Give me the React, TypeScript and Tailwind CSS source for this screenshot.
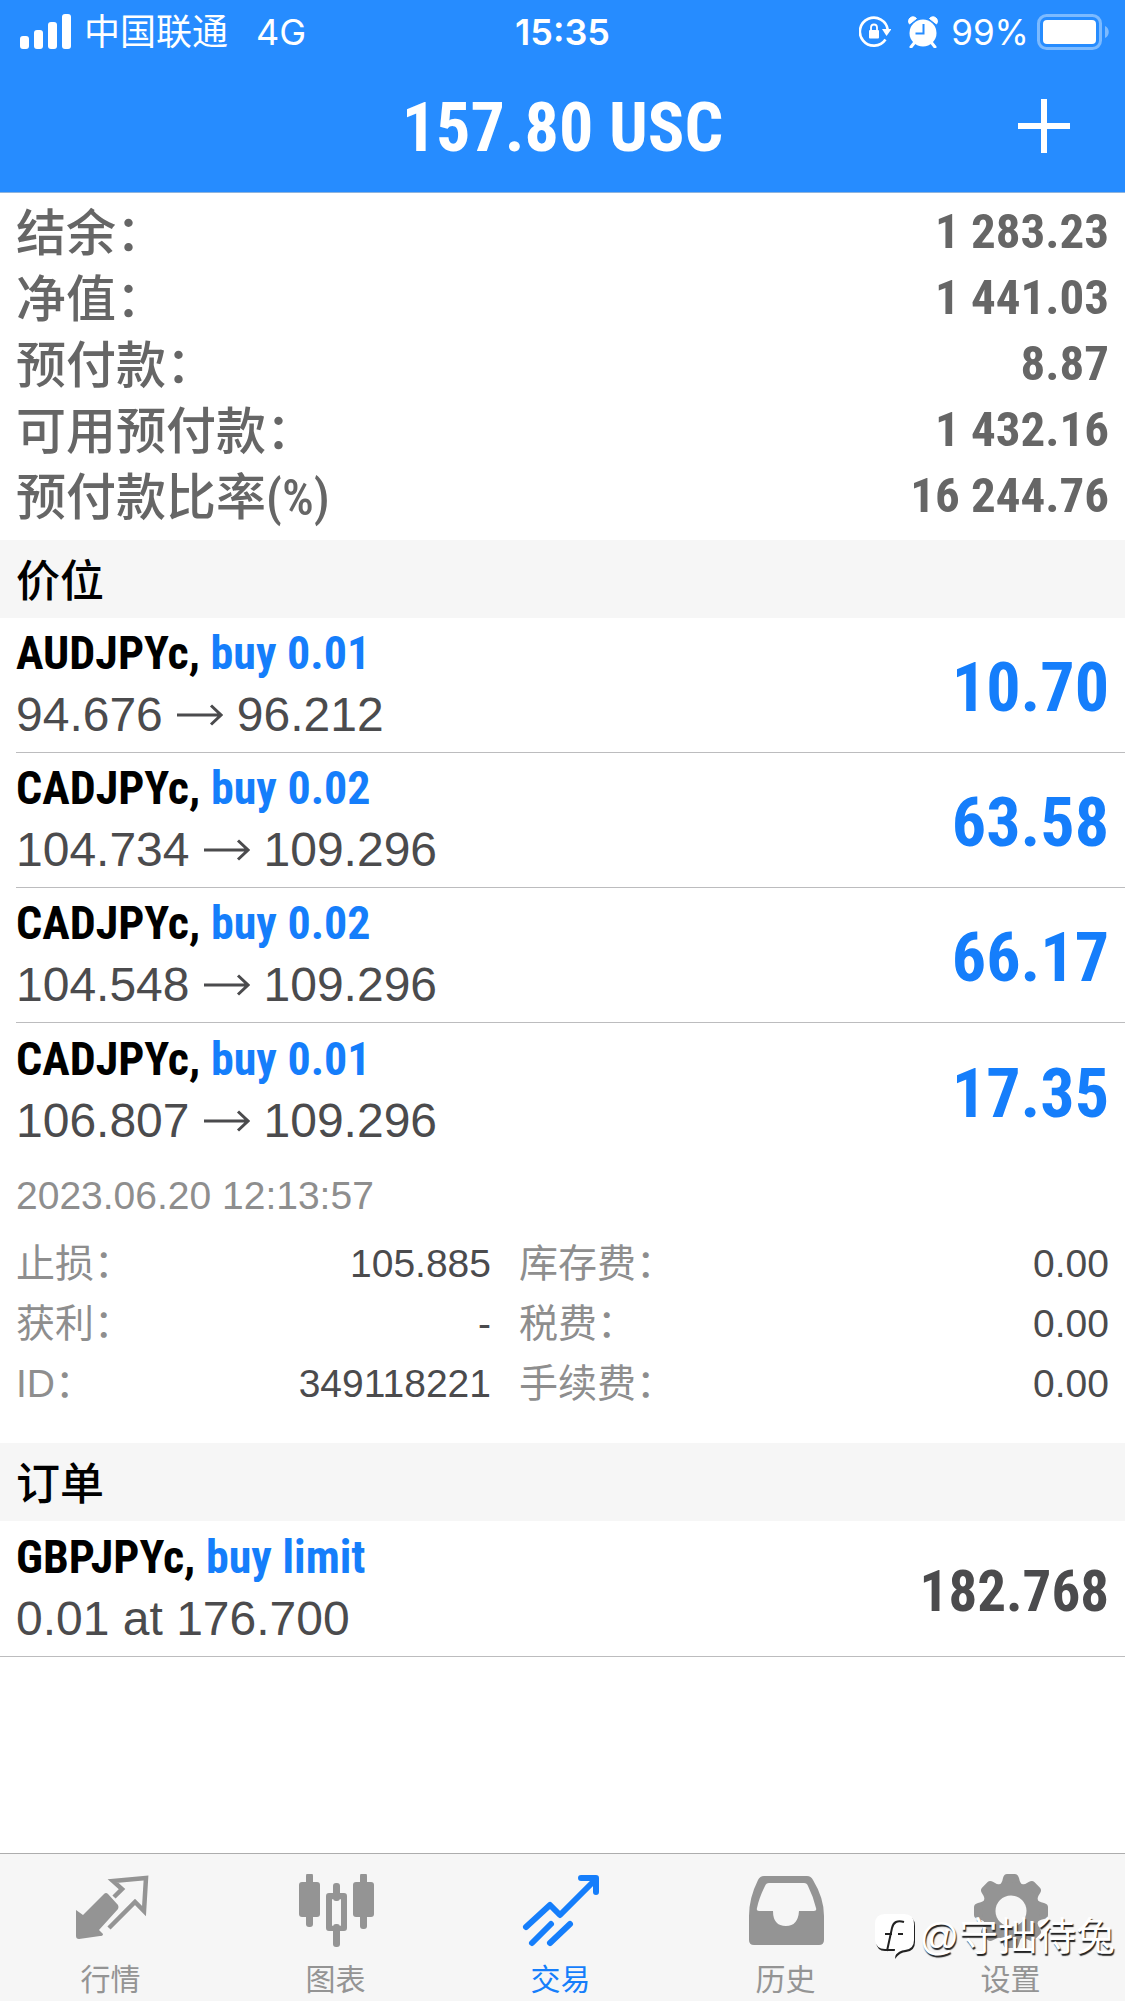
import React from 'react';

type Row = { label: string; unit?: string; value: string };

type Position = {
  id: number;
  symbol: string;
  side: string;
  open: string;
  current: string;
  profit: string;
};

const summary: Row[] = [
  { label: '结余：', value: '1 283.23' },
  { label: '净值：', value: '1 441.03' },
  { label: '预付款：', value: '8.87' },
  { label: '可用预付款：', value: '1 432.16' },
  { label: '预付款比率', unit: '(%)', value: '16 244.76' },
];

const positions: Position[] = [
  { id: 1, symbol: 'AUDJPYc', side: 'buy 0.01', open: '94.676', current: '96.212', profit: '10.70' },
  { id: 2, symbol: 'CADJPYc', side: 'buy 0.02', open: '104.734', current: '109.296', profit: '63.58' },
  { id: 3, symbol: 'CADJPYc', side: 'buy 0.02', open: '104.548', current: '109.296', profit: '66.17' },
  { id: 4, symbol: 'CADJPYc', side: 'buy 0.01', open: '106.807', current: '109.296', profit: '17.35' },
];

// 持仓详情，左右两列
const detailsLeft: Row[] = [
  { label: '止损：', value: '105.885' },
  { label: '获利：', value: '-' },
  { label: 'ID：', value: '349118221' },
];

const detailsRight: Row[] = [
  { label: '库存费：', value: '0.00' },
  { label: '税费：', value: '0.00' },
  { label: '手续费：', value: '0.00' },
];

const narrow = "font-['Roboto_Condensed','Liberation_Sans',sans-serif] font-bold";
const status = "font-[Inter,'Noto_Sans_CJK_SC',sans-serif]";
const chinese = "font-['Noto_Sans_CJK_SC',sans-serif]";

function StatusBar() {
  return (
    <div className={`${status} grid h-16 grid-cols-3 items-center px-5 text-4xl`}>
      <div className="flex items-center whitespace-nowrap">
        <svg className="mr-3 h-9 w-[52px]" viewBox="0 0 52 36" fill="white">
          <rect x="0" y="22" width="9" height="13" rx="3" />
          <rect x="14" y="16" width="9" height="19" rx="3" />
          <rect x="28" y="8" width="9" height="27" rx="3" />
          <rect x="42" y="0" width="9" height="35" rx="3" />
        </svg>
        <span>中国联通</span>
        <span className="ml-7">4G</span>
      </div>
      <span className="text-center font-semibold">15:35</span>
      <div className="-mr-1 flex items-center justify-end">
        <svg className="mr-4 size-8" viewBox="0 0 32 32" fill="none">
          <path d="M26.500 23.500A14 14 0 1 1 28.800 14" stroke="white" strokeWidth="2.600" />
          <path d="M23 13h9.500l-5 7z" fill="white" />
          <rect x="10" y="14" width="10" height="8.500" rx="1" fill="white" />
          <path d="M12 14v-2.500a3 3 0 0 1 6 0V14" stroke="white" strokeWidth="1.800" />
        </svg>
        <svg className="mr-3 size-8" viewBox="0 0 32 32" fill="none">
          <path d="m8 26-4 5M24 26l4 5" stroke="white" strokeWidth="3" strokeLinecap="round" />
          <path d="M2.500 8a4.200 4.200 0 0 1 7-5.500zM29.500 8a4.200 4.200 0 0 0-7-5.500z" fill="white" stroke="white" strokeLinejoin="round" />
          <circle cx="16" cy="17" r="13.500" fill="white" />
          <path d="M16.500 8v9.500H8.500" stroke="#268cff" strokeWidth="2" />
        </svg>
        <span className="text-[35px]">99%</span>
        <svg className="ml-2 h-9 w-[72px]" viewBox="0 0 72 36" fill="none">
          <rect x="1.500" y="1.500" width="62" height="33" rx="8" stroke="#7cbaff" strokeWidth="3" />
          <rect x="6" y="6" width="53" height="24" rx="4" fill="white" />
          <path d="M68 12c5 2 5 10 0 12z" fill="#7cbaff" />
        </svg>
      </div>
    </div>
  );
}

function SectionTitle({ children }: { children: React.ReactNode }) {
  return (
    <h2 className={`${chinese} h-[78px] bg-[#f6f6f6] px-4 text-[44px] leading-[76px] font-medium text-black`}>
      {children}
    </h2>
  );
}

function Arrow() {
  return (
    <svg className="mx-3.5 h-6 w-[46px]" viewBox="0 0 46 24" fill="none" stroke="currentColor" strokeWidth="3">
      <path d="M0 12h44M34 2.500l10 9.500-10 9.500" />
    </svg>
  );
}

function PositionRow({ position, last }: { position: Position; last: boolean }) {
  return (
    <li className="pl-4">
      <div className={`flex h-[135px] items-center justify-between pr-4 ${last ? '' : 'border-b border-[#bcbcbe]'}`}>
        <div className="pb-1">
          <p className={`${narrow} text-[46px] leading-[64px]`}>
            <span className="text-black">{position.symbol},</span>{' '}
            <span className="text-[#157efb]">{position.side}</span>
          </p>
          <p className="flex items-center text-5xl leading-[60px] text-[#4b4b4d]">
            {position.open}
            <Arrow />
            {position.current}
          </p>
        </div>
        <span className={`${narrow} pt-1.5 text-[68px] leading-[80px] text-[#157efb]`}>{position.profit}</span>
      </div>
    </li>
  );
}

function DetailColumn({ rows }: { rows: Row[] }) {
  return (
    <dl className="leading-[60px]">
      {rows.map((row) => (
        <div key={row.label} className="flex h-[60px] items-center justify-between">
          <dt className="text-[#8e8e8e]">{row.label}</dt>
          <dd className="text-[#4b4b4d]">{row.value}</dd>
        </div>
      ))}
    </dl>
  );
}

function QuotesIcon() {
  return (
    <svg className="h-20 w-20" viewBox="0 0 80 80" fill="none">
      <path d="M33 20Q35 18 37 20L47 31Q48 33 47 35L28 56L32 60Q32 62 29 62L8 65Q5 65 5 62V36L12 41Z" fill="#949494" />
      <path d="M43 23l8-8-9-8 33-3-2 33-9-9-26 26" stroke="#949494" strokeWidth="4.500" />
    </svg>
  );
}

function ChartIcon() {
  return (
    <svg className="h-20 w-20" viewBox="0 0 80 80" fill="#949494">
      <rect x="10" y="-1" width="7" height="54" rx="3" />
      <rect x="3" y="8" width="21" height="35" rx="3" />
      <rect x="64" y="-1" width="7" height="56" rx="3" />
      <rect x="57" y="8" width="21" height="35" rx="3" />
      <rect x="37" y="9" width="7" height="18" rx="3" />
      <rect x="37" y="50" width="7" height="23" rx="3" />
      <path fillRule="evenodd" d="M33 19h15q3 0 3 3v32q0 3-3 3H33q-3 0-3-3V22q0-3 3-3zm4 6q-1 0-1 1v25q0 1 1 1h7q1 0 1-1V26q0-1-1-1z" />
    </svg>
  );
}

function TradeIcon() {
  return (
    <svg className="h-20 w-20" viewBox="0 0 80 80" fill="none" stroke="#157efb" strokeWidth="6" strokeLinecap="round" strokeLinejoin="round">
      <path d="M5 53l24-22 10 10L73 7M60 4h15v14" />
      <path d="M11 69l19-19M29 69l20-19" />
    </svg>
  );
}

function HistoryIcon() {
  return (
    <svg className="h-20 w-20" viewBox="0 0 80 80" fill="#949494">
      <path
        fillRule="evenodd"
        d="M18 2h43q4 0 6 4 11 18 11 36v24q0 5-5 5H8q-5 0-5-5V42Q3 24 12 6q2-4 6-4zm5 7q-3 0-4 3-6 12-8 22-1 3 2 3h14q0 15 13 15 12 0 13-15h15q3 0 2-3-3-12-8-22-1-3-4-3z"
      />
    </svg>
  );
}

function SettingsIcon() {
  return (
    <svg className="h-20 w-20" viewBox="0 0 80 80">
      <g fill="#949494">
        {[0, 45, 90, 135, 180, 225, 270, 315].map((angle) => (
          <path key={angle} transform={`rotate(${angle} 40 37)`} d="M27 12q4-2 5-8 1-4 4-4h8q3 0 4 4 1 6 5 8z" />
        ))}
        <circle cx="40" cy="37" r="29" />
      </g>
      <circle cx="40" cy="37" r="15.500" fill="#f6f6f6" />
    </svg>
  );
}

const tabs = [
  { label: '行情', icon: <QuotesIcon /> },
  { label: '图表', icon: <ChartIcon /> },
  { label: '交易', icon: <TradeIcon />, active: true },
  { label: '历史', icon: <HistoryIcon /> },
  { label: '设置', icon: <SettingsIcon /> },
];

// 右下角的作者水印
function Watermark() {
  return (
    <div className="pointer-events-none absolute right-2.5 bottom-9 flex items-center text-[39px] leading-[56px] whitespace-nowrap text-white [text-shadow:1px_2px_1px_#222]">
      <svg className="mr-1 h-12 w-10" viewBox="0 0 40 48">
        <path d="M10 3h20q10 0 10 10v16q0 9-9 10-6 0-11 7l1-8H10q-8 0-9-9V13q0-10 9-10z" fill="#222" />
        <path d="M10 1h19q10 0 10 10v16q0 9-9 10-6 0-11 7l1-8H10q-9 0-10-9V11Q0 1 10 1z" fill="white" />
        <path d="M29 9q-10-3-12 6l-5 23M10 21h7M23 21h5" fill="none" stroke="#222" strokeWidth="2" />
      </svg>
      @守拙待兔
    </div>
  );
}

export default function App() {
  return (
    <div className="flex min-h-screen flex-col bg-white font-['Liberation_Sans','Noto_Sans_CJK_SC',sans-serif]">
      <header className="h-[193px] border-b border-[#8fb4dd] bg-[#268cff] text-white">
        <StatusBar />
        <div className="grid h-[124px] grid-cols-[1fr_auto_1fr] items-center px-[53px]">
          <h1 className={`${narrow} col-start-2 pt-1 text-[68px] leading-[80px]`}>157.80 USC</h1>
          <button type="button" aria-label="新订单" className="justify-self-end">
            <svg className="size-14" viewBox="0 0 56 56" stroke="white" strokeWidth="6">
              <path d="M28 1v54M2 28h52" />
            </svg>
          </button>
        </div>
      </header>

      <main className="grow">
        <dl className="px-4 pt-1 pb-[13px] text-[#666]">
          {summary.map((row) => (
            <div key={row.label} className="flex h-[66px] justify-between">
              <dt className={`${chinese} text-[50px] leading-[64px] font-medium`}>
                {row.label}
                {row.unit && <span className="font-['Roboto_Condensed',sans-serif] leading-none">{row.unit}</span>}
              </dt>
              <dd className={`${narrow} text-[49px] leading-[70px]`}>{row.value}</dd>
            </div>
          ))}
        </dl>

        <SectionTitle>价位</SectionTitle>
        <ul>
          {positions.map((position, i) => (
            <PositionRow key={position.id} position={position} last={i === positions.length - 1} />
          ))}
        </ul>
        <div className="px-4 pb-[29px] text-[39px]">
          <p className="h-[76px] leading-[76px] text-[#8e8e8e]">2023.06.20 12:13:57</p>
          <div className="grid grid-cols-[475px_1fr] gap-x-7">
            <DetailColumn rows={detailsLeft} />
            <DetailColumn rows={detailsRight} />
          </div>
        </div>

        <SectionTitle>订单</SectionTitle>
        <div className="flex h-[136px] items-center justify-between border-b border-[#bcbcbe] px-4">
          <div className="pb-1">
            <p className={`${narrow} text-[46px] leading-[64px]`}>
              <span className="text-black">GBPJPYc,</span> <span className="text-[#157efb]">buy limit</span>
            </p>
            <p className="text-5xl leading-[60px] text-[#4b4b4d]">0.01 at 176.700</p>
          </div>
          <span className={`${narrow} pt-1.5 text-[57px] leading-[80px] text-[#4b4b4d]`}>182.768</span>
        </div>
      </main>

      <nav className="relative grid h-[148px] grid-cols-5 border-t border-[#adadad] bg-[#f6f6f6]">
        {tabs.map((tab) => (
          <button
            key={tab.label}
            type="button"
            className={`flex flex-col items-center pt-5 pr-1 text-3xl ${tab.active ? 'text-[#157efb]' : 'text-[#949494]'}`}
          >
            {tab.icon}
            <span className={`${chinese} leading-[46px]`}>{tab.label}</span>
          </button>
        ))}
        <Watermark />
      </nav>
    </div>
  );
}
